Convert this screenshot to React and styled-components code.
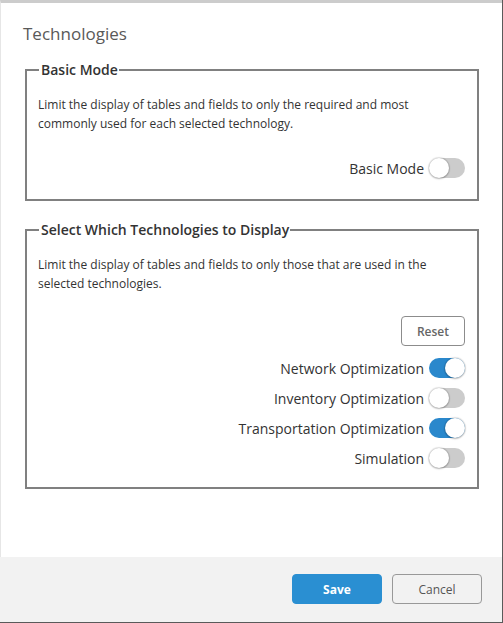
import React, { useState } from "react";
import styled, { createGlobalStyle } from "styled-components";

const GlobalStyle = createGlobalStyle`
  html, body {
    margin: 0;
    padding: 0;
    background: #ffffff;
  }
  body {
    font-family: "Open Sans", "Liberation Sans", Arial, sans-serif;
    color: #333;
  }
`;

const technologies = [
  { name: "Network Optimization", on: true },
  { name: "Inventory Optimization", on: false },
  { name: "Transportation Optimization", on: true },
  { name: "Simulation", on: false },
];

function Toggle({ on, onClick }) {
  return (
    <Track $on={on} onClick={onClick}>
      <Knob $on={on} />
    </Track>
  );
}

function App() {
  const [basic, setBasic] = useState(false);
  const [techs, setTechs] = useState(technologies);

  const flip = (index) => {
    setTechs(techs.map((t, i) => (i === index ? { ...t, on: !t.on } : t)));
  };

  return (
    <>
      <GlobalStyle />
      <Dialog>
        <Body>
          <Title>Technologies</Title>

          <Group>
            <Legend>Basic Mode</Legend>
            <Description>
              Limit the display of tables and fields to only the required and most
              commonly used for each selected technology.
            </Description>
            <Rows $top={25}>
              <Row>
                <Label>Basic Mode</Label>
                <Toggle on={basic} onClick={() => setBasic(!basic)} />
              </Row>
            </Rows>
          </Group>

          <Group $spaced>
            <Legend>Select Which Technologies to Display</Legend>
            <Description>
              Limit the display of tables and fields to only those that are used in the
              selected technologies.
            </Description>
            <Actions>
              <ResetButton onClick={() => setTechs(technologies)}>Reset</ResetButton>
            </Actions>
            <Rows $top={7}>
              {techs.map((t, i) => (
                <Row key={t.name} $tall>
                  <Label>{t.name}</Label>
                  <Toggle on={t.on} onClick={() => flip(i)} />
                </Row>
              ))}
            </Rows>
          </Group>
        </Body>

        <Footer>
          <FooterButton $primary>Save</FooterButton>
          <FooterButton>Cancel</FooterButton>
        </Footer>
      </Dialog>
    </>
  );
}

export default App;

const Dialog = styled.div`
  box-sizing: border-box;
  width: 503px;
  height: 623px;
  display: flex;
  flex-direction: column;
  border-right: 1px solid #5a5a5a;
  border-bottom: 1px solid #5a5a5a;
  background: #fff;
`;

const Body = styled.div`
  flex: 1;
  border-top: 3px solid #cccccc;
  border-left: 1px solid #e6e6e6;
  padding: 19px 23px 0 24px;
`;

const Title = styled.div`
  font-size: 17px;
  line-height: 24px;
  color: #595959;
  margin-left: -2px;
  margin-bottom: 14px;
`;

const Group = styled.fieldset`
  margin: ${(p) => (p.$spaced ? "19px" : "0")} 0 0 0;
  padding: 0 12px ${(p) => (p.$spaced ? "14px" : "21px")} 12px;
  border: 2px solid #808080;
  min-width: 0;
`;

const Legend = styled.legend`
  padding: 0 1px 0 2px;
  font-size: 14px;
  line-height: 20px;
  font-weight: 600;
  color: #333;
`;

const Description = styled.p`
  margin: 15px 0 0 -1px;
  font-size: 12px;
  line-height: 19px;
  color: #333;
`;

const Actions = styled.div`
  display: flex;
  justify-content: flex-end;
  margin-top: 23px;
`;

const ResetButton = styled.button`
  width: 64px;
  height: 30px;
  border: 1px solid #8c8c8c;
  border-radius: 4px;
  background: #fff;
  color: #666;
  font-family: inherit;
  font-size: 12px;
  font-weight: 600;
  cursor: pointer;
`;

const Rows = styled.div`
  margin-top: ${(p) => p.$top}px;
  display: flex;
  flex-direction: column;
`;

const Row = styled.div`
  display: flex;
  align-items: center;
  justify-content: flex-end;
  gap: 5px;
  height: ${(p) => (p.$tall ? "30px" : "20px")};
`;

const Label = styled.span`
  font-size: 14px;
  color: #333;
`;

const Track = styled.div`
  position: relative;
  width: 36px;
  height: 20px;
  border-radius: 10px;
  background: ${(p) => (p.$on ? "#2a88cc" : "#cccccc")};
  cursor: pointer;
`;

const Knob = styled.div`
  position: absolute;
  top: 0;
  left: ${(p) => (p.$on ? "16px" : "0")};
  width: 20px;
  height: 20px;
  border-radius: 50%;
  background: #fff;
  box-shadow: 0 0 1px 1px rgba(0, 0, 0, 0.12), 0 1px 2px rgba(0, 0, 0, 0.2);
`;

const Footer = styled.div`
  height: 65px;
  box-sizing: border-box;
  background: #f2f2f2;
  display: flex;
  justify-content: flex-end;
  align-items: flex-start;
  gap: 10px;
  padding: 17px 20px 0 0;
`;

const FooterButton = styled.button`
  width: 90px;
  height: 30px;
  border-radius: 4px;
  font-family: inherit;
  font-size: 12px;
  font-weight: ${(p) => (p.$primary ? 700 : 400)};
  color: ${(p) => (p.$primary ? "#fff" : "#555")};
  background: ${(p) => (p.$primary ? "#2a8fd2" : "#f2f2f2")};
  border: 1px solid ${(p) => (p.$primary ? "#2a8fd2" : "#999")};
  cursor: pointer;
`;
